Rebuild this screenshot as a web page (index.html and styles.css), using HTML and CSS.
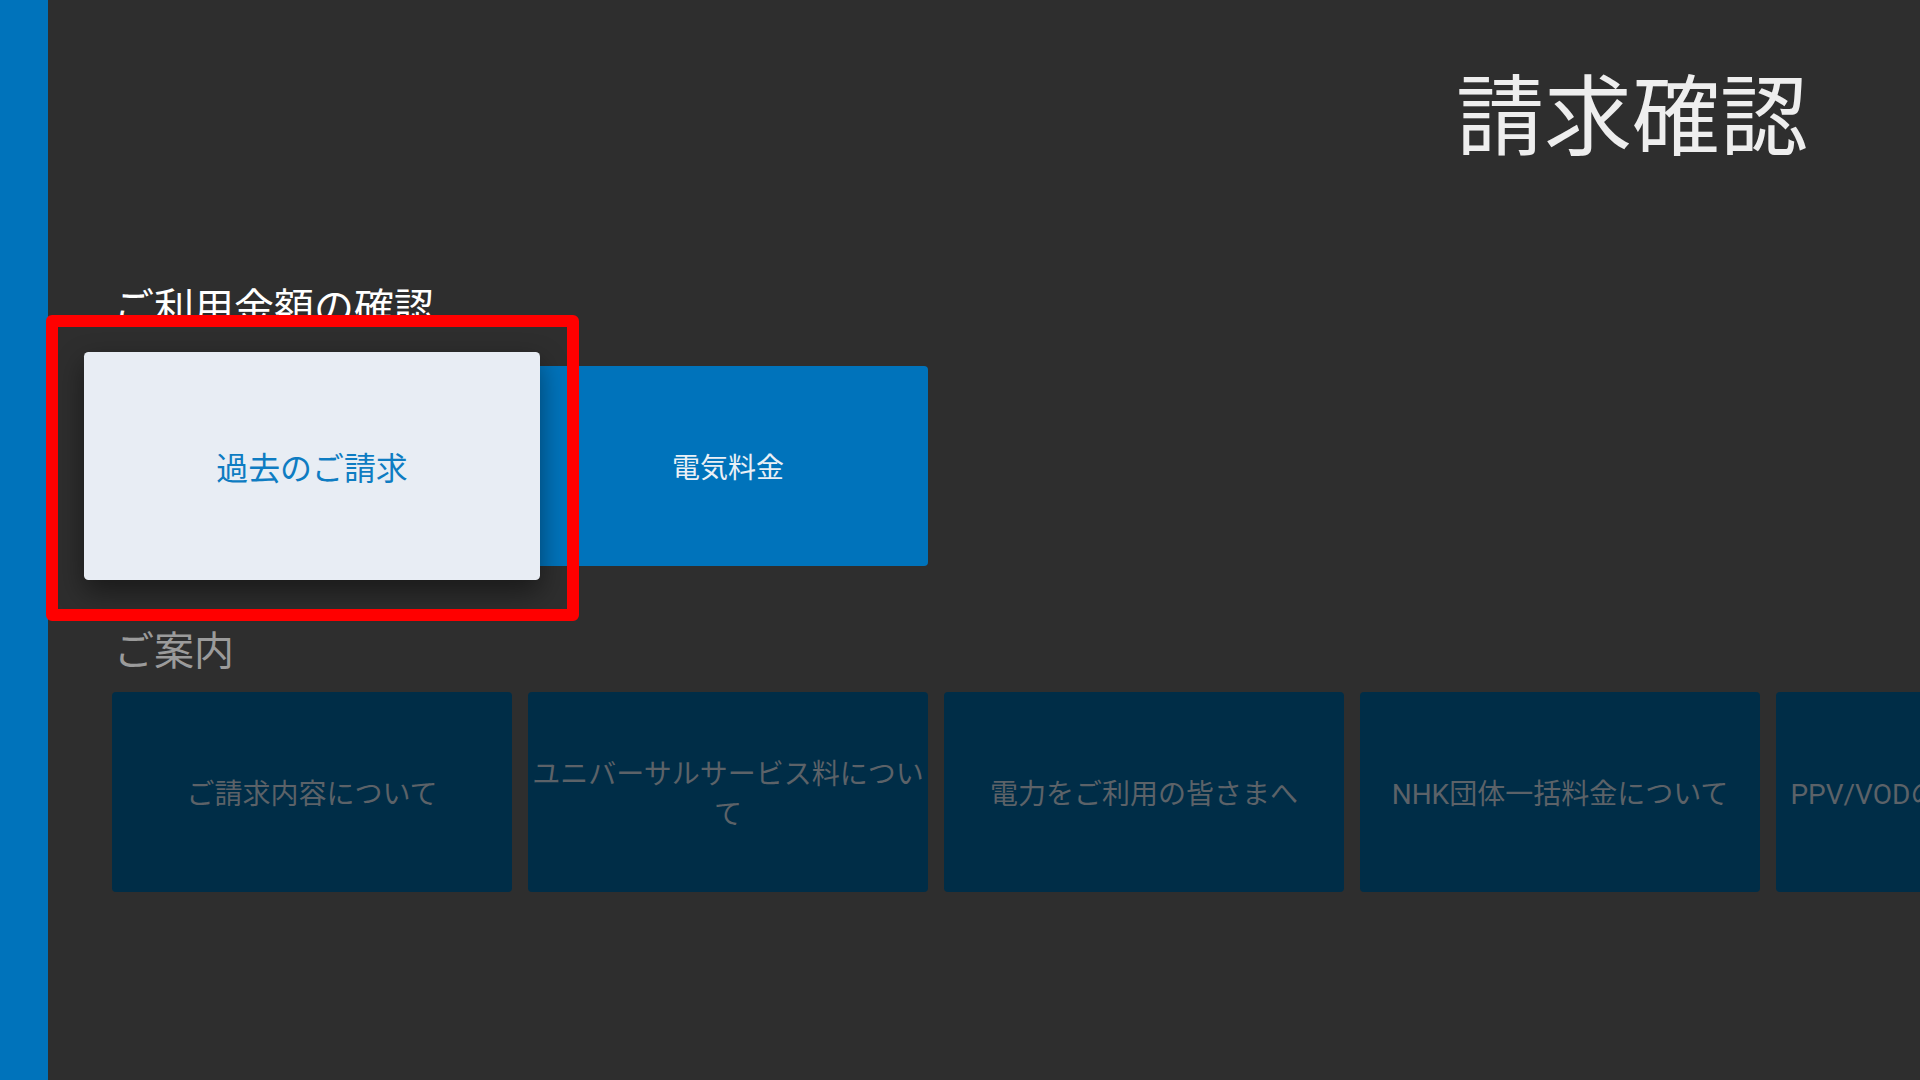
FILE: index.html
```html
<!DOCTYPE html>
<html lang="ja">
<head>
<meta charset="utf-8">
<title>請求確認</title>
<link rel="stylesheet" href="styles.css">
</head>
<body>
<div class="screen">
  <aside class="rail"></aside>
  <main class="content">
    <header class="page-title">請求確認</header>
    <section class="group">
      <h2 class="group-title">ご利用金額の確認</h2>
      <div class="row">
        <div class="card card--primary is-focused">過去のご請求</div>
        <div class="card card--primary">電気料金</div>
      </div>
    </section>
    <section class="group group--dim">
      <h2 class="group-title group-title--dim">ご案内</h2>
      <div class="row">
        <div class="card card--dim">ご請求内容について</div>
        <div class="card card--dim">ユニバーサルサービス料について</div>
        <div class="card card--dim">電力をご利用の皆さまへ</div>
        <div class="card card--dim">NHK団体一括料金について</div>
        <div class="card card--dim">PPV/VODの購入料金について</div>
      </div>
    </section>
  </main>
  <div class="focus-ring"></div>
</div>
</body>
</html>
```

FILE: styles.css
```css
html, body {
  margin: 0;
  padding: 0;
  background: #2e2e2e;
}

.screen {
  position: relative;
  width: 1920px;
  height: 1080px;
  overflow: hidden;
  display: flex;
  background: #2e2e2e;
  font-family: Roboto, "Noto Sans CJK JP", sans-serif;
}

.rail {
  flex: 0 0 48px;
  background: #0073bb;
}

.content {
  flex: 1 1 auto;
  min-width: 0;
  padding-left: 64px;
  display: flex;
  flex-direction: column;
}

.page-title {
  margin: 74px 112px 0 0;
  align-self: flex-end;
  font-size: 88px;
  line-height: 1;
  color: #eeeeee;
  font-weight: 400;
}

.group {
  display: flex;
  flex-direction: column;
}

.group:first-of-type {
  margin-top: 127px;
}

.group-title {
  margin: 0 0 37px 2px;
  font-size: 40px;
  line-height: 1;
  font-weight: 400;
  color: #ffffff;
}

.group--dim {
  margin-top: 66px;
}

.group-title--dim {
  color: #9b9b9b;
  margin-bottom: 20px;
}

.row {
  display: flex;
  gap: 16px;
}

.card {
  flex: 0 0 400px;
  height: 200px;
  box-sizing: border-box;
  padding: 6px 4px 0;
  border-radius: 4px;
  display: flex;
  align-items: center;
  justify-content: center;
  text-align: center;
  font-size: 28px;
  line-height: 40px;
}

.card--primary {
  background: #0073bb;
  color: #eaf0f6;
}

.card--dim {
  background: #002d47;
  color: #5c6268;
}

.is-focused {
  position: relative;
  z-index: 2;
  transform: scale(1.14);
  background: #e8edf4;
  color: #0e7cc2;
  box-shadow: 0 10px 24px rgba(0, 0, 0, 0.45);
}

.focus-ring {
  position: absolute;
  left: 46px;
  top: 315px;
  width: 533px;
  height: 306px;
  box-sizing: border-box;
  border: 12px solid #ff0000;
  border-radius: 6px;
  z-index: 5;
  pointer-events: none;
}
```
